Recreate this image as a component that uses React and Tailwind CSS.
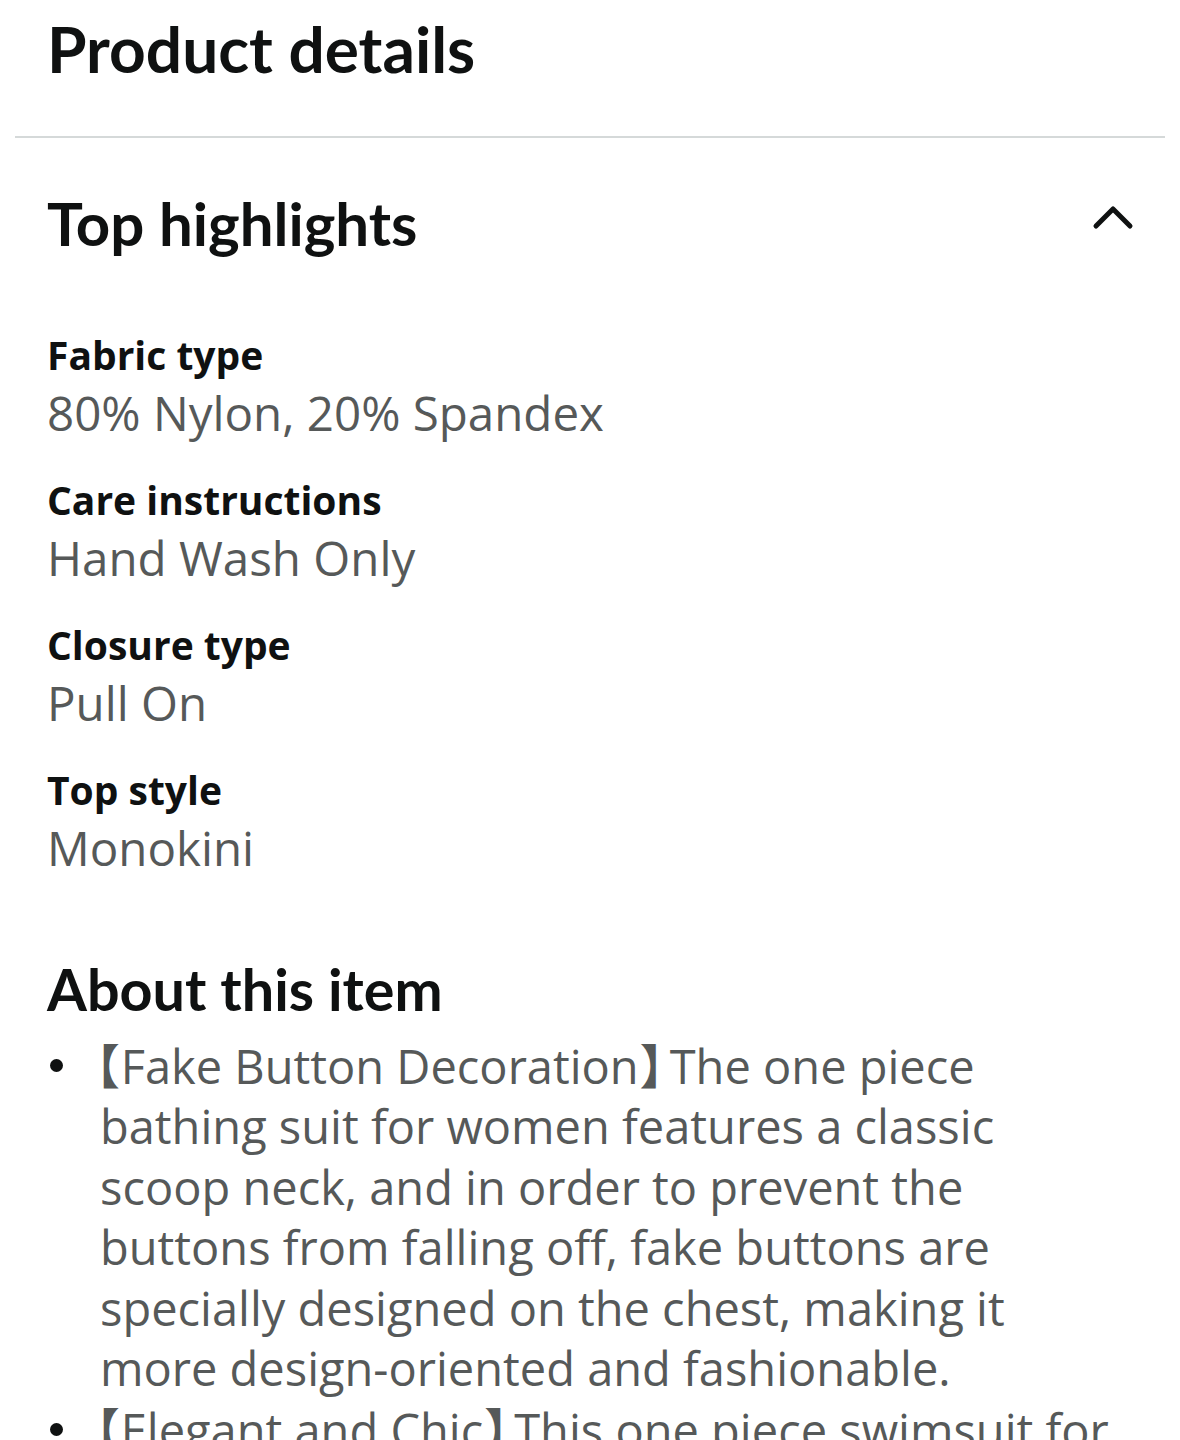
const highlights = [
  { label: 'Fabric type', value: '80% Nylon, 20% Spandex' },
  { label: 'Care instructions', value: 'Hand Wash Only' },
  { label: 'Closure type', value: 'Pull On' },
  { label: 'Top style', value: 'Monokini' },
];

const bullets = [
  {
    tag: 'Fake Button Decoration',
    text: 'The one piece bathing suit for women features a classic scoop neck, and in order to prevent the buttons from falling off, fake buttons are specially designed on the chest, making it more design-oriented and fashionable.',
  },
  {
    tag: 'Elegant and Chic',
    text: 'This one piece swimsuit for women is designed with a flattering silhouette that shows off your curves and keeps you comfortable all day long.',
  },
];

const heading = { fontFamily: 'Lato, "Open Sans", sans-serif' };
const cjk = { fontFamily: '"Noto Sans CJK SC", sans-serif' };

function Bracket({ children, side }) {
  return (
    <span
      className={`inline-block font-bold ${side === 'open' ? '-ml-[0.58em] mr-[0.02em]' : 'ml-[0.02em] -mr-[0.36em]'}`}
      style={cjk}
    >
      {children}
    </span>
  );
}

export default function App() {
  return (
    <div className="bg-white min-h-screen overflow-hidden text-[#0f1111]" style={{ fontFamily: '"Open Sans", "Noto Sans", sans-serif' }}>
      <div className="px-[15px]">
        {/* Header */}
        <div className="px-8 pt-[14px] pb-[52px] border-b-2 border-[#d5d9d9]">
          <h1 className="text-[64px] leading-[70px] font-bold" style={heading}>Product details</h1>
        </div>

        <div className="px-8">
          {/* Top highlights */}
          <div className="flex items-center justify-between pt-[50px]">
            <h2 className="text-[60px] leading-[70px] font-bold" style={heading}>Top highlights</h2>
            <svg width="44" height="32" viewBox="0 0 44 32" className="-mr-[2px] -mt-[10px]" fill="none" stroke="#0f1111" strokeWidth="5" strokeLinecap="round" strokeLinejoin="round">
              <polyline points="5,24 22,7 39,24" />
            </svg>
          </div>

          <div className="mt-[72px] flex flex-col gap-[29px]">
            {highlights.map((item) => (
              <div key={item.label} className="flex flex-col">
                <span className="text-[39px] leading-[50px] font-bold">{item.label}</span>
                <span className="text-[47.5px] leading-[66px] text-[#565959]">{item.value}</span>
              </div>
            ))}
          </div>

          {/* About this item */}
          <h2 className="mt-[78px] text-[57.5px] leading-[60px] font-bold" style={heading}>About this item</h2>
          <ul className="mt-[15px] flex flex-col">
            {bullets.map((b) => (
              <li key={b.tag} className="flex items-start">
                <span className="w-[53px] shrink-0 pl-[3px] pt-[25px]">
                  <span className="block w-[13px] h-[13px] rounded-full bg-[#0f1111]" />
                </span>
                <span className="text-[47px] leading-[60.4px] text-[#565959] max-w-[1025px]">
                  <Bracket side="open">【</Bracket>
                  {b.tag}
                  <Bracket side="close">】</Bracket>
                  {b.text}
                </span>
              </li>
            ))}
          </ul>
        </div>
      </div>
    </div>
  );
}
